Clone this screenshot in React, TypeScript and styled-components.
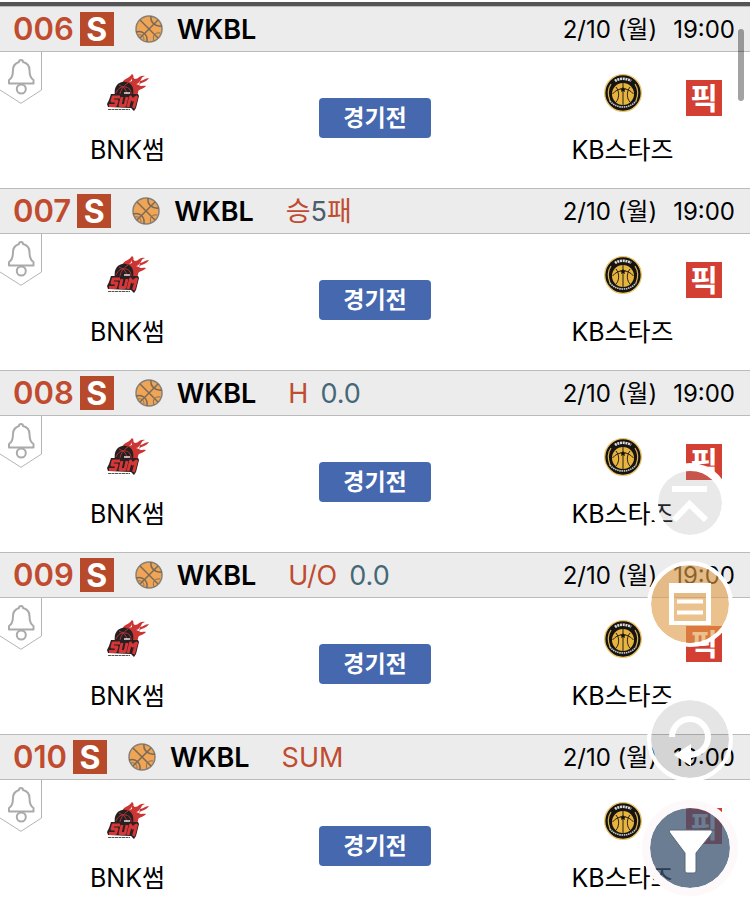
import React from 'react';
import styled, { createGlobalStyle, css } from 'styled-components';

const GlobalStyle = createGlobalStyle`
  * { box-sizing: border-box; }
  body {
    margin: 0;
    background: #fff;
    color: #000;
    font-family: Inter, "Noto Sans CJK KR", sans-serif;
  }
  button { font-family: inherit; border: 0; padding: 0; cursor: pointer; }
`;

const Screen = styled.main`
  height: 100vh;
  overflow-y: auto;
  scrollbar-width: none;
  padding-top: 2px;
`;

const GameList = styled.ul`
  list-style: none;
  margin: 0;
  padding: 0;
  border-top: 4px solid #555;
`;

const RowHeader = styled.header`
  display: flex;
  align-items: center;
  height: 46px;
  padding: 0 15px 0 13px;
  background: #ececec;
  border-top: 1px solid #bbb;
  border-bottom: 1px solid #bbb;
  white-space: nowrap;
`;

const GameNumber = styled.span`
  color: #c04b2f;
  font-size: 31px;
  font-weight: 600;
  line-height: 34px;
`;

const SingleTag = styled.span`
  width: 34px;
  height: 34px;
  margin: 0 21px 0 6px;
  background: #b84a2c;
  color: #fff;
  font-size: 32px;
  font-weight: 700;
  line-height: 35px;
  text-align: center;
`;

const League = styled.strong`
  margin: 0 32px 0 14px;
  padding-top: 2px;
  font-size: 27px;
  font-weight: 600;
  line-height: 34px;
`;

const Market = styled.span<{ $spaced: boolean }>`
  display: flex;
  align-items: center;
  gap: ${(p) => (p.$spaced ? '12px' : '0')};
  padding-top: 2px;
  font-size: 27px;
  line-height: 34px;
`;

const MarketPart = styled.span<{ $tone: Tone }>`
  color: ${(p) => ({ red: '#c04b2f', blue: '#456879', slate: '#4e5d6c' })[p.$tone]};
`;

const Schedule = styled.time`
  display: flex;
  gap: 16px;
  margin-left: auto;
  padding-top: 2px;
  font-size: 24px;
  line-height: 34px;
`;

const RowBody = styled.div`
  display: grid;
  grid-template-columns: 34% 1fr 34%;
  height: 136px;
`;

const Side = styled.div`
  display: grid;
  grid-template-columns: 1fr auto 1fr;
  align-items: start;
`;

const Team = styled.div`
  grid-column: 2;
  display: flex;
  flex-direction: column;
  align-items: center;
  gap: 20px;
  padding-top: 21px;
`;

const TeamName = styled.span`
  font-size: 25px;
  line-height: 34px;
  white-space: nowrap;
`;

const AlarmButton = styled.button`
  justify-self: start;
  width: 42px;
  height: 52px;
  background: none;
  svg { display: block; }
`;

const StatusButton = styled.button`
  justify-self: center;
  width: 112px;
  height: 40px;
  margin-top: 46px;
  border-radius: 4px;
  background: #4668af;
  color: #fff;
  font-size: 23px;
  font-weight: 600;
  line-height: 40px;
`;

const PickButton = styled.button`
  justify-self: end;
  width: 36px;
  height: 36px;
  margin: 28px 28px 0 0;
  background: #d43f33;
  color: #fff;
  font-size: 30px;
  font-weight: 600;
  line-height: 34px;
`;

const ScrollThumb = styled.div`
  position: fixed;
  top: 29px;
  right: 6px;
  width: 6px;
  height: 72px;
  border-radius: 3px;
  background: rgba(0, 0, 0, 0.36);
`;

const Dock = styled.nav`
  position: fixed;
  right: 12px;
  bottom: 8px;
  display: flex;
  flex-direction: column;
  gap: 49px;
`;

const DockGroup = styled.div`
  display: flex;
  flex-direction: column;
  align-items: center;
  gap: 18px;
`;

type RoundKind = 'top' | 'slip' | 'refresh' | 'filter';

const roundStyles = {
  top: css`width: 80px; height: 80px; border: 8px solid #fff; background-color: rgba(160, 160, 160, 0.23);`,
  slip: css`width: 86px; height: 86px; border: 4px solid #fff; background-color: rgba(223, 157, 71, 0.62);`,
  refresh: css`width: 86px; height: 86px; border: 4px solid #fff; background-color: rgba(0, 0, 0, 0.1);`,
  filter: css`width: 96px; height: 96px; border: 8px solid #fdf9fb; background-color: rgba(57, 81, 109, 0.75);`,
};

const RoundButton = styled.button<{ $kind: RoundKind }>`
  display: grid;
  place-items: center;
  border-radius: 50%;
  ${(p) => roundStyles[p.$kind]}
  background-clip: padding-box;
`;

const BallIcon = () => (
  <svg width="28" height="28" viewBox="0 0 28 28" fill="none" stroke="#776a59" strokeWidth="1.5" aria-hidden="true">
    <circle cx="14" cy="14" r="13" fill="#f0a455" stroke="#858078" />
    <path d="M5 5 23 23" />
    <path d="M23 5 5 23" />
    <path d="M16 1C15 7 20 12 27 11" />
    <path d="M1 17C7 15 13 19 12 27" />
    <path d="M3 20C6 19 9 21 9 25" strokeWidth="0.8" />
    <path d="M19 26C17 21 20 17 25 18" strokeWidth="0.9" />
  </svg>
);

const BellIcon = () => (
  <svg width="42" height="52" viewBox="0 0 42 52" fill="none" aria-hidden="true">
    <path d="M41.5 0V38L21 51.3 0 38" stroke="#b4b4b4" />
    <path
      d="M9 31.500V28C12.500 26 13 23 13 18C13 13 16 11 19 10C19 7.300 23 7.300 23 10C27 11 29.500 13 29.500 18C29.500 23 30 26 33.500 28V31.500Z"
      stroke="#aaa" strokeWidth="2" strokeLinejoin="round"
    />
    <circle cx="21.300" cy="37" r="4.500" fill="#fff" stroke="#aaa" strokeWidth="2" />
  </svg>
);

const SumLogo = () => (
  <svg width="42" height="40" viewBox="0 0 42 40" role="img" aria-label="BNK SUM">
    <path
      d="M15 10C17 5 22 6 25 1C28 3 25 5 28 6C32 6 32 2 38 3C34 4 35 6 33 8C36 8 38 5 42 5C39 10 34 9 32 12C34 14 37 12 39 13C36 17 31 15 31 20L29 24H22Z"
      fill="#cb3533"
    />
    <path d="M22 9C23 8 25 7 25 5L25 8ZM29 11C31 11 32 9 33 8L32 12Z" fill="#fff" />
    <path d="M8 23C6 13 12 8 19 9C26 10 28 17 25 25Z" fill="#242022" />
    <path d="M9 20C11 15 15 13 18 14C22 14 24 17 24 21M12 12C17 14 20 17 20 22M21 10C16 13 13 18 13 22" fill="none" stroke="#b83433" strokeWidth="1" />
    <path d="M4 21 31 21 32 23 29 35 27 38 24 35 1 34 0 31 2 27Z" fill="#292023" />
    <path
      d="M13 24H6L5 28H10L8.500 32.500H2M15 24 13 32.500H18L20 24M21 34 23.500 24 25.500 27 29.500 24 26.500 35"
      fill="none" stroke="#d63635" strokeWidth="2.900" strokeLinejoin="round"
    />
    <path d="M17 20H23" stroke="#fff" strokeWidth="1.300" />
    <path d="M1 36.500H23" stroke="#555" strokeWidth="1" strokeDasharray="3 0.5" />
  </svg>
);

const StarsLogo = () => (
  <svg width="40" height="40" viewBox="0 0 40 40" fill="none" role="img" aria-label="KB STARS">
    <circle cx="20" cy="20" r="18.300" fill="#151411" stroke="#edc468" strokeWidth="1.300" />
    <circle cx="20" cy="21" r="11" fill="#e8b440" />
    <path d="M8 11C4 17 5 23 7 28M32 11C36 17 35 23 33 28" stroke="#ddb250" strokeWidth="1.200" />
    <path d="M20 10V32M9.500 21C15 14 25 14 30.500 21M13 14C17 19 16 26 13 29M27 14C23 19 24 26 27 29" stroke="#272015" strokeWidth="1" />
    <path d="m20 14 1 1.500h2l-1.500 1.500.5 2-2-1-2 1 .5-2-1.500-1.500h2Z" fill="#171410" />
    <path d="M12 8C16 5 24 5 28 8" stroke="#ddd" strokeWidth="2.600" strokeDasharray="2 0.7" />
    <path d="M7 28C13 36 27 36 33 28" stroke="#ccc" strokeWidth="1.700" strokeDasharray="1.5 0.7" />
  </svg>
);

const TopIcon = () => (
  <svg width="64" height="64" viewBox="0 0 64 64" fill="none" stroke="#fff" strokeWidth="6" aria-hidden="true">
    <path d="M14 18H49M16 49 31.500 33 48 49" />
  </svg>
);

const SlipIcon = () => (
  <svg width="78" height="78" viewBox="0 0 78 78" fill="none" aria-hidden="true">
    <path fillRule="evenodd" d="M18 18H60V60H18ZM23 28V56H55V28Z" fill="#fff" />
    <path d="M26 36.500H52M26 47.500H52" stroke="#fff" strokeWidth="4" />
  </svg>
);

const RefreshIcon = () => (
  <svg width="78" height="78" viewBox="0 0 78 78" fill="none" aria-hidden="true">
    <path d="M21 37A18 18 0 1 1 39 55" stroke="#fff" strokeWidth="6" />
    <path d="M23 55 40 44V66Z" fill="#fff" />
  </svg>
);

const FilterIcon = () => (
  <svg width="80" height="80" viewBox="0 0 80 80" aria-hidden="true">
    <path
      d="M20 22Q18 22 20 25L35 45V63Q35 65 37 65H44Q46 65 46 63V45L62 25Q63 22 61 22Z"
      fill="#fff" stroke="#596879" strokeWidth="1"
    />
  </svg>
);

type Tone = 'red' | 'blue' | 'slate';

interface Game {
  no: string;
  market: { text: string; tone: Tone }[];
  spaced?: boolean;
}

const games: Game[] = [
  { no: '006', market: [] },
  {
    no: '007',
    market: [
      { text: '승', tone: 'red' },
      { text: '5', tone: 'slate' },
      { text: '패', tone: 'red' },
    ],
  },
  { no: '008', spaced: true, market: [{ text: 'H', tone: 'red' }, { text: '0.0', tone: 'blue' }] },
  { no: '009', spaced: true, market: [{ text: 'U/O', tone: 'red' }, { text: '0.0', tone: 'blue' }] },
  { no: '010', market: [{ text: 'SUM', tone: 'red' }] },
];

const GameRow = ({ game }: { game: Game }) => (
  <li>
    <RowHeader>
      <GameNumber>{game.no}</GameNumber>
      <SingleTag>S</SingleTag>
      <BallIcon />
      <League>WKBL</League>
      <Market $spaced={!!game.spaced}>
        {game.market.map((part) => (
          <MarketPart key={part.text} $tone={part.tone}>{part.text}</MarketPart>
        ))}
      </Market>
      <Schedule>
        <span>2/10 (월)</span>
        <span>19:00</span>
      </Schedule>
    </RowHeader>
    <RowBody>
      <Side>
        <AlarmButton type="button" aria-label="알림"><BellIcon /></AlarmButton>
        <Team>
          <SumLogo />
          <TeamName>BNK썸</TeamName>
        </Team>
      </Side>
      <StatusButton type="button">경기전</StatusButton>
      <Side>
        <Team>
          <StarsLogo />
          <TeamName>KB스타즈</TeamName>
        </Team>
        <PickButton type="button">픽</PickButton>
      </Side>
    </RowBody>
  </li>
);

export default function App() {
  return (
    <>
      <GlobalStyle />
      <Screen>
        <GameList>
          {games.map((game) => <GameRow key={game.no} game={game} />)}
        </GameList>
      </Screen>
      <ScrollThumb />
      <Dock>
        <DockGroup>
          <RoundButton type="button" $kind="top" aria-label="맨 위로"><TopIcon /></RoundButton>
          <RoundButton type="button" $kind="slip" aria-label="목록"><SlipIcon /></RoundButton>
        </DockGroup>
        <DockGroup>
          <RoundButton type="button" $kind="refresh" aria-label="새로고침"><RefreshIcon /></RoundButton>
          <RoundButton type="button" $kind="filter" aria-label="필터"><FilterIcon /></RoundButton>
        </DockGroup>
      </Dock>
    </>
  );
}
